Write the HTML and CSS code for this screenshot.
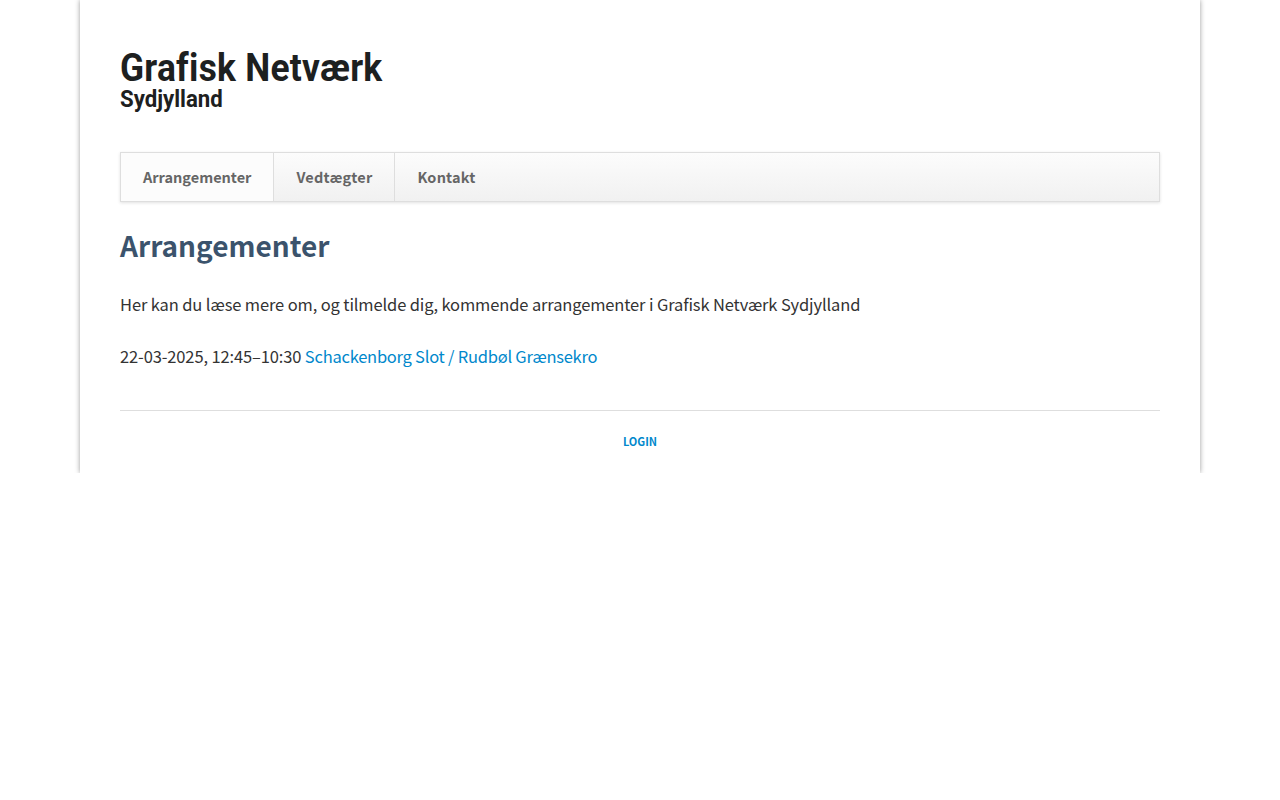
FILE: index.html
```html
<!DOCTYPE html>
<html lang="da">
<head>
<meta charset="utf-8">
<title>Arrangementer</title>
<link rel="stylesheet" href="styles.css">
</head>
<body>
<div class="page">
  <header class="logo">
    <div class="logo-main">Grafisk Netværk</div>
    <div class="logo-sub">Sydjylland</div>
  </header>
  <nav class="nav">
    <a class="nav-item active" href="#">Arrangementer</a>
    <a class="nav-item" href="#">Vedtægter</a>
    <a class="nav-item" href="#">Kontakt</a>
  </nav>
  <main>
    <h1 class="title">Arrangementer</h1>
    <p class="intro">Her kan du læse mere om, og tilmelde dig, kommende arrangementer i Grafisk Netværk Sydjylland</p>
    <p class="event">22-03-2025, 12:45–10:30 <a class="event-link" href="#">Schackenborg Slot / Rudbøl Grænsekro</a></p>
  </main>
  <footer class="footer"><a href="#">LOGIN</a></footer>
</div>
</body>
</html>
```
FILE: styles.css
```css
html, body {
  margin: 0;
  padding: 0;
  background: #fff;
}
body {
  font-family: "Noto Sans CJK SC", "Noto Sans", sans-serif;
  color: #333;
  font-size: 16.5px;
}
a {
  color: #0088cc;
  text-decoration: none;
}
.page {
  box-sizing: border-box;
  width: 1120px;
  height: 473px;
  margin: 0 auto;
  padding: 0 40px;
  background: #fff;
  box-shadow: 0 0 5px rgba(0, 0, 0, 0.4);
  clip-path: inset(0 -12px 0 -12px);
  display: flow-root;
}
.logo {
  padding-top: 49px;
  height: 106px;
  box-sizing: border-box;
  font-family: Roboto, sans-serif;
  color: #1d2020;
  font-weight: 700;
  font-variant-ligatures: none;
}
.logo-main {
  font-size: 39px;
  line-height: 38px;
  letter-spacing: 0.3px;
  transform: scaleX(0.905);
  transform-origin: 0 0;
  white-space: nowrap;
}
.logo-sub {
  font-size: 24px;
  line-height: 24px;
  transform: scaleX(0.925);
  transform-origin: 0 0;
  white-space: nowrap;
}
.nav {
  margin-top: 46px;
  height: 50px;
  box-sizing: border-box;
  display: flex;
  border: 1px solid #dedede;
  background: linear-gradient(#fcfcfc, #f1f1f1);
  box-shadow: 0 1px 3px rgba(0, 0, 0, 0.12);
}
.nav-item {
  padding: 0 22px;
  line-height: 48px;
  font-size: 14.5px;
  font-weight: 700;
  color: #666;
  border-right: 1px solid #dedede;
}
.nav-item + .nav-item {
  letter-spacing: 0.2px;
}
.nav-item:last-child {
  border-right: 0;
}
.nav-item.active {
  background: #fcfcfc;
}
.title {
  margin: 21px 0 0;
  font-size: 28px;
  line-height: 44px;
  font-weight: 700;
  color: #3b536c;
}
.intro {
  margin: 22px 0 0;
  line-height: 30px;
  letter-spacing: -0.13px;
}
.event {
  margin: 22px 0 0;
  line-height: 30px;
  letter-spacing: -0.13px;
}
.event-link {
  letter-spacing: -0.24px;
}
.footer {
  margin-top: 39px;
  border-top: 1px solid #dedede;
  padding-top: 21px;
  text-align: center;
  font-size: 11px;
  line-height: 18px;
  font-weight: 700;
}
```
